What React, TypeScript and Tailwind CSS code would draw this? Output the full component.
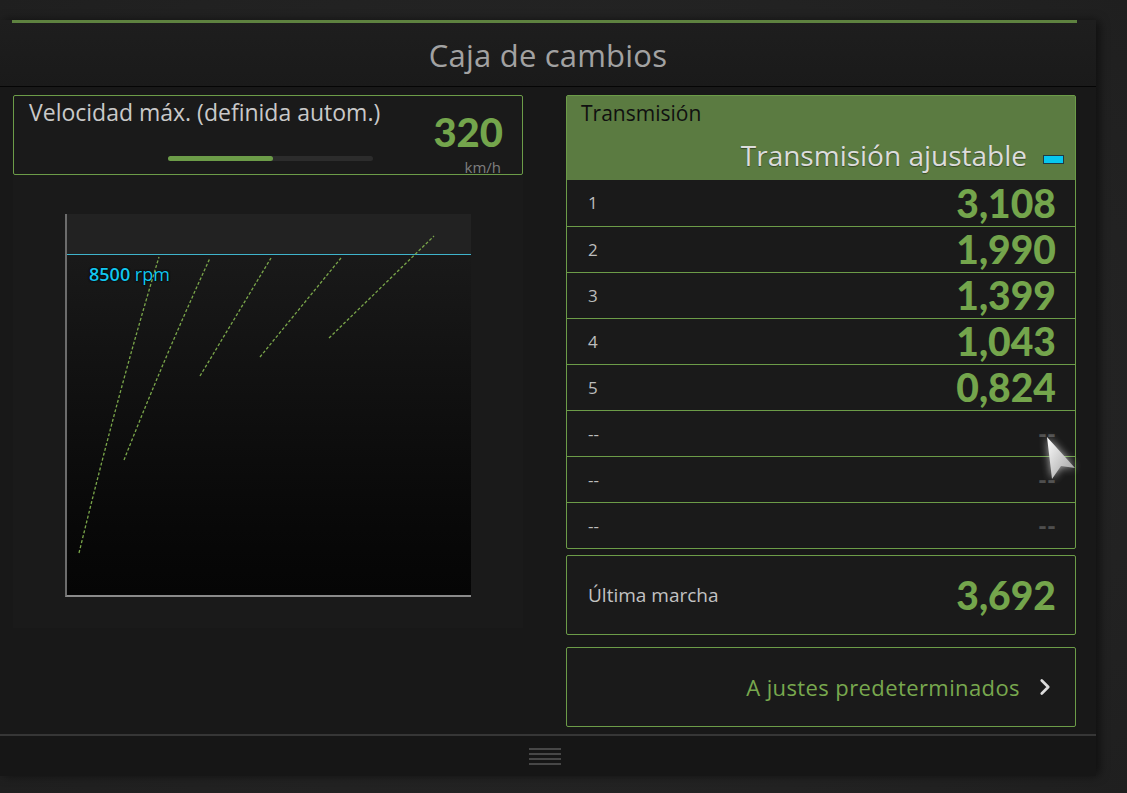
import React from 'react';
import { ChevronRight } from 'lucide-react';

const gears = [
  { n: '1', v: '3,108' },
  { n: '2', v: '1,990' },
  { n: '3', v: '1,399' },
  { n: '4', v: '1,043' },
  { n: '5', v: '0,824' },
  { n: '--', v: '--' },
  { n: '--', v: '--' },
  { n: '--', v: '--' },
];

// gear curves in plot coords (406 x 383)
const curves = [
  'M12 339 Q52 175 92 43',
  'M57 246 Q98 142 143 44',
  'M133 162 L204 44',
  'M193 143 L274 44',
  'M262 124 L367 22',
];

const GearChart = () => (
  <div className="relative w-[406px] h-[383px] border-l-2 border-b-2 border-l-[#6c6c6c] border-b-[#8a8a8a] bg-gradient-to-b from-[#1c1c1c] to-[#050505]">
    <div className="h-[40px] bg-[#222222]" />
    <div className="h-px bg-[#3fb4cc]" />
    <div className="mt-[9px] ml-[22px] text-[18px] leading-5 text-[#12c6ef] [text-shadow:0_0_2px_#000,0_0_2px_#000]">
      <span className="font-semibold">8500</span> rpm
    </div>
    <svg className="absolute inset-0" width="406" height="383" viewBox="0 0 406 383">
      {curves.map((d, i) => (
        <path key={i} d={d} fill="none" stroke="#7aa64a" strokeWidth="1.3" strokeDasharray="3 2" />
      ))}
    </svg>
  </div>
);

const Cursor = () => (
  <svg
    className="absolute left-[1040px] top-[430px] [filter:drop-shadow(0_0_4px_rgba(255,255,255,0.7))]"
    width="44"
    height="52"
    viewBox="0 0 44 52"
  >
    <defs>
      <linearGradient id="cg" x1="0" y1="0" x2="1" y2="1">
        <stop offset="0" stopColor="#ffffff" />
        <stop offset="1" stopColor="#9a9a9a" />
      </linearGradient>
    </defs>
    <path d="M7 7 L35 38 L21 36 L12 49 Z" fill="url(#cg)" />
  </svg>
);

export default function App() {
  return (
    <div className="relative w-[1127px] h-[793px] overflow-hidden bg-[radial-gradient(ellipse_at_center,#2b2b2b,#1f1f1f)] pt-[20px] font-['Open_Sans',sans-serif]">
      <div className="w-[1096px] h-[756px] flex flex-col bg-[#1b1b1b] rounded-r-md shadow-[4px_0_10px_rgba(0,0,0,0.5)]">
        {/* Header */}
        <div className="h-[67px] flex flex-col bg-gradient-to-b from-[#1e1e1e] to-[#1a1a1a] border-b border-[#050505]">
          <div className="ml-[12px] mr-[19px] h-[3px] bg-[#5e8240]" />
          <div className="flex-1 flex items-center justify-center pt-[2px] text-[31px] text-[#a2a2a2] tracking-[0.2px]">
            Caja de cambios
          </div>
        </div>

        {/* Body */}
        <div className="flex-1 flex bg-[#181818] pl-[13px] pr-[20px] pt-[8px] gap-[43px]">
          {/* Left column */}
          <div className="w-[510px] flex flex-col">
            <div className="h-[80px] border border-[#6c9c48] rounded-[2px] bg-[#1a1a1a] relative">
              <div className="absolute left-[15px] top-[0px] text-[23px] leading-8 text-[#c9c9c9]">
                Velocidad máx. (definida autom.)
              </div>
              <div className="absolute left-[154px] top-[60px] w-[205px] h-[5px] rounded-full bg-[#2c2c2c]">
                <div className="h-full w-[105px] rounded-full bg-[#6c9c48]" />
              </div>
              <div className="absolute right-[19px] top-[12px] font-['Lato',sans-serif] font-black text-[40px] leading-[48px] text-[#74a54c]">
                320
              </div>
              <div className="absolute right-[21px] top-[61px] text-[15px] leading-[20px] text-[#7e7e7e]">km/h</div>
            </div>
            <div className="h-[453px] bg-[#1a1a1a] pl-[52px] pt-[39px]">
              <GearChart />
            </div>
          </div>

          {/* Right column */}
          <div className="w-[510px] flex flex-col">
            <div className="border border-[#6c9c48] rounded-[2px] bg-[#1a1a1a]">
              <div className="h-[84px] bg-[#5b7b41] relative">
                <div className="absolute left-[14px] top-[2px] text-[21px] text-[#101010]">Transmisión</div>
                <div className="absolute right-[11px] top-[38px] flex items-center gap-[16px]">
                  <span className="text-[28px] text-[#dcdcdc] [text-shadow:0_1px_1px_rgba(0,0,0,0.4)]">Transmisión ajustable</span>
                  <span className="w-[21px] h-[9px] mt-[8px] bg-[#06c8ef] border border-[#1f3a44]" />
                </div>
              </div>
              {gears.map((g, i) => (
                <div
                  key={i}
                  className={`h-[46px] flex items-center justify-between pl-[21px] pr-[19px] ${i > 0 ? 'border-t border-[#6c9c48]' : ''}`}
                >
                  <span className="text-[17px] text-[#bdbdbd]">{g.n}</span>
                  {g.v === '--' ? (
                    <span className="font-['Lato',sans-serif] font-black text-[24px] text-[#4e4e4e]">--</span>
                  ) : (
                    <span className="font-['Lato',sans-serif] font-black text-[39px] leading-none text-[#74a54c]">{g.v}</span>
                  )}
                </div>
              ))}
            </div>

            <div className="mt-[6px] h-[80px] border border-[#6c9c48] rounded-[2px] bg-[#1a1a1a] flex items-center justify-between pl-[21px] pr-[19px]">
              <span className="text-[19px] text-[#c2c2c2]">Última marcha</span>
              <span className="font-['Lato',sans-serif] font-black text-[39px] leading-none text-[#74a54c]">3,692</span>
            </div>

            <div className="mt-[12px] h-[80px] border border-[#6c9c48] rounded-[2px] bg-[#1a1a1a] flex items-center justify-end pr-[17px] gap-[12px]">
              <span className="text-[22px] text-[#78a84e] tracking-[0.4px]">A justes predeterminados</span>
              <ChevronRight className="w-[26px] h-[26px] text-[#dcdcdc]" strokeWidth={2.5} />
            </div>
          </div>
        </div>

        {/* Footer */}
        <div className="h-[42px] border-t-2 border-[#363636] bg-[#161616] flex items-center justify-center">
          <div className="w-[32px] flex flex-col gap-[3px] -ml-[6px]">
            <div className="h-[2px] bg-[#474747]" />
            <div className="h-[2px] bg-[#474747]" />
            <div className="h-[2px] bg-[#474747]" />
            <div className="h-[2px] bg-[#474747]" />
          </div>
        </div>
      </div>
      <Cursor />
    </div>
  );
}
